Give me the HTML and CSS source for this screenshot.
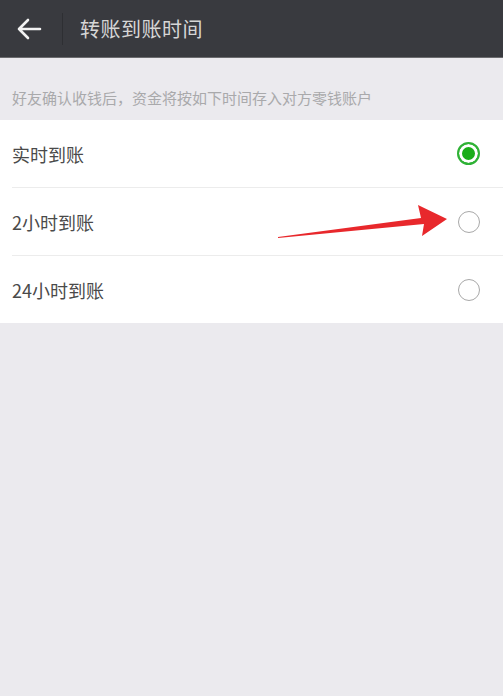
FILE: index.html
```html
<!DOCTYPE html>
<html lang="zh-CN">
<head>
    <meta charset="UTF-8">
    <meta name="viewport" content="width=device-width, initial-scale=1.0">
    <title>转账到账时间</title>
    <link rel="stylesheet" href="styles.css">
</head>
<body>
    <div class="top-bar">
        <div class="back-button">
            <svg width="26" height="22" viewBox="0 0 26 22">
                <path d="M24 11H3M12 2L3 11l9 9" fill="none" stroke="#f2f2f2" stroke-width="2.6" stroke-linecap="round" stroke-linejoin="round"/>
            </svg>
        </div>
        <div class="top-bar-divider"></div>
        <h1 class="top-bar-title">转账到账时间</h1>
    </div>

    <p class="hint">好友确认收钱后，资金将按如下时间存入对方零钱账户</p>

    <div class="option-list">
        <div class="option-row">
            <span class="option-label">实时到账</span>
            <span class="radio radio-checked"></span>
        </div>
        <div class="option-row">
            <span class="option-label">2小时到账</span>
            <span class="radio"></span>
        </div>
        <div class="option-row">
            <span class="option-label">24小时到账</span>
            <span class="radio"></span>
        </div>

        <!-- 红色箭头标注 -->
        <svg class="mark-arrow" width="180" height="40" viewBox="0 0 180 40">
            <path d="M2 35 L148 21 L146 33 L171 16 L142 2 L145 15 L2 34 Z" fill="#e8282c"/>
        </svg>
    </div>
</body>
</html>
```

FILE: styles.css
```css
body {
    margin: 0;
    background-color: #ebeaee;
    font-family: "Noto Sans CJK SC", "Noto Sans", sans-serif;
    min-height: 100vh;
}

.top-bar {
    height: 57px;
    background-color: #393a3f;
    display: flex;
    align-items: center;
    border-bottom: 1px solid #6b6b6e;
}

.back-button {
    width: 62px;
    display: flex;
    justify-content: center;
    padding-right: 4px;
    box-sizing: border-box;
}

.back-button svg {
    display: block;
}

.top-bar-divider {
    width: 1px;
    height: 32px;
    background-color: #2e2f33;
}

.top-bar-title {
    margin: 0 0 0 17px;
    font-size: 20px;
    font-weight: normal;
    color: #d6d6d6;
    letter-spacing: 0.5px;
}

.hint {
    margin: 0;
    padding: 30px 0 0 12px;
    height: 32px;
    font-size: 15px;
    line-height: 20px;
    color: #a9a9ab;
}

.option-list {
    background-color: #fff;
    position: relative;
}

.option-row {
    height: 67px;
    display: flex;
    align-items: center;
    justify-content: space-between;
    margin-left: 12px;
    padding-right: 23px;
    border-bottom: 1px solid #ececec;
}

.option-row:last-of-type {
    border-bottom: none;
}

.option-label {
    font-size: 18px;
    color: #4a4a4a;
}

.radio {
    width: 20px;
    height: 20px;
    border: 1.5px solid #a8a8a8;
    border-radius: 50%;
}

.radio-checked {
    border: 2px solid #2fb236;
    background-color: #1aad19;
    box-shadow: inset 0 0 0 3px #fff;
    width: 19px;
    height: 19px;
}

.mark-arrow {
    position: absolute;
    left: 276px;
    top: 83px;
}
```
